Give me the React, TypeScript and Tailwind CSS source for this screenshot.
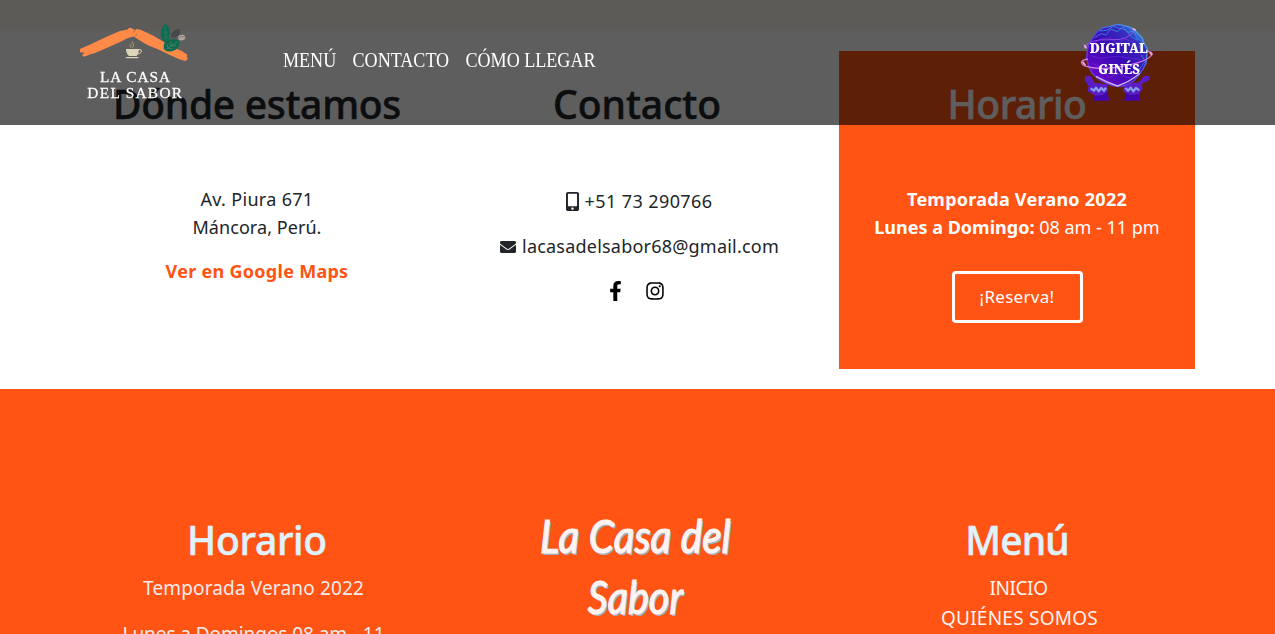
import React from "react";
import { FaFacebookF, FaInstagram, FaEnvelope, FaMobileAlt } from "react-icons/fa";

function Logo() {
  return (
    <svg viewBox="0 0 390 270" className="h-[90px] w-[130px] shrink-0">
      <path d="M30 102 L62 88 L110 65 L150 48 L176 43 L174 40 L184 38 L188 42 L198 45 L198 62 L172 70 L150 81 L110 99 L75 114 L62 118 L42 125 L36 120 L44 113 L30 112 Z" fill="#ff8a48" />
      <path d="M188 50 L200 42 L212 44 L250 62 L290 86 L312 98 L336 108 L352 119 L350 126 L354 131 L347 138 L328 133 L300 120 L262 102 L232 90 L206 74 L190 63 Z" fill="#ff8a48" />
      <path d="M196 44 L191 52 M200 57 L197 62" stroke="#5e5e5e" strokeWidth="2" />
      <path d="M286 26 C304 36 306 66 289 82 C268 76 266 42 286 26 Z" fill="#0f6b50" />
      <path d="M286 34 L288 78 M279 50 L287 56 L295 49 M279 64 L288 69 L296 62" stroke="#4d8370" strokeWidth="1.2" fill="none" />
      <path d="M330 42 C332 58 324 68 305 70 C300 54 312 44 330 42 Z" fill="#454343" />
      <path d="M328 44 L303 73" stroke="#6a6868" strokeWidth="1.6" />
      <ellipse cx="335" cy="68" rx="11" ry="8" fill="#b5a6a0" transform="rotate(-15 335 68)" />
      <path d="M326 70 Q334 62 344 66" stroke="#5b5351" strokeWidth="1.8" fill="none" />
      <path d="M282 103 C276 76 300 66 328 76 C332 100 312 114 288 108 Z" fill="#0f6b50" />
      <path d="M322 80 L286 105 M302 78 L303 92 L318 92 M291 88 L294 99 L308 102" stroke="#7d9270" strokeWidth="1.4" fill="none" />
      <path d="M183 98 Q176 91 184 86 M188 98 Q194 90 187 80" stroke="#ad9f75" strokeWidth="3" fill="none" />
      <path d="M168 102 H207 Q207 116 200 123 H177 Q168 116 168 102 Z" fill="#ddd5b8" />
      <path d="M206 104 Q217 103 213 112 Q210 117 202 117" stroke="#ddd5b8" strokeWidth="3" fill="none" />
      <path d="M165 126 H208 L202 130 H171 Z" fill="#ddd5b8" />
      <g fill="#ffffff" fontFamily="'Liberation Serif', serif" fontSize="46" stroke="#ffffff" strokeWidth="0.8">
        <text x="90" y="201" textLength="210">LA CASA</text>
        <text x="52" y="250" textLength="284">DEL SABOR</text>
      </g>
    </svg>
  );
}

function Badge() {
  return (
    <svg viewBox="0 0 282 282" className="h-[94px] w-[94px] shrink-0">
      <defs>
        <linearGradient id="orb" x1="0.1" y1="0.9" x2="0.8" y2="0.05">
          <stop offset="0" stopColor="#6d08c8" />
          <stop offset="0.5" stopColor="#390ab4" />
          <stop offset="0.85" stopColor="#3a2cc0" />
          <stop offset="1" stopColor="#348de0" />
        </linearGradient>
        <linearGradient id="rim" x1="0" y1="1" x2="1" y2="0">
          <stop offset="0" stopColor="#8a2be8" />
          <stop offset="0.5" stopColor="#4b45d8" />
          <stop offset="1" stopColor="#4cc4f5" />
        </linearGradient>
      </defs>
      <path d="M70 257 L78 222 H110 L118 257 Z M162 257 L170 222 H202 L212 257 Z" fill="#4505ad" />
      <path d="M46 182 L62 184 L75 204 L112 208 L114 228 L98 240 L76 242 L52 228 L56 214 L44 196 Z M238 182 L222 183 L207 202 L162 208 L158 228 L180 240 L206 238 L218 222 L216 206 L238 196 Z" fill="#5a1dc4" />
      <path d="M62 220 L72 227 L78 218 L86 229 L94 219 L102 227 L108 218 M166 219 L174 227 L182 218 L190 229 L198 219 L208 226" stroke="#8b9cf0" strokeWidth="7" fill="none" strokeLinejoin="round" />
      <path d="M142 28 L162 32 L178 36 L194 44 L205 57 L216 68 L222 84 L232 102 L230 124 L228 145 L218 163 L206 181 L190 199 L170 210 L148 215 L124 211 L100 201 L80 188 L66 174 L56 154 L50 130 L52 105 L58 82 L72 65 L82 49 L100 38 L120 34 Z" fill="url(#orb)" stroke="url(#rim)" strokeWidth="4" strokeLinejoin="round" />
      <g fill="none" stroke="#2fa7e8" strokeWidth="2.5" strokeOpacity="0.8">
        <path d="M75 68 L92 56 L108 60 L122 42 L142 50 L158 36 L174 52 L192 48 L200 68 L216 80 L208 96 L226 112" />
        <path d="M88 48 L110 46 L130 34 L148 40 L166 44 L184 66 L204 76 M214 120 L226 140 L212 156 L202 178" />
      </g>
      <g fill="none" stroke="#8f3bee" strokeWidth="2" strokeOpacity="0.6">
        <path d="M64 92 L88 74 L120 68 L140 84 L166 72 L196 84 M66 145 L92 156 L116 188 L148 176 L180 190 L198 170 M62 122 L90 130 L142 124 L212 134" />
      </g>
      <path d="M42 100 Q50 72 120 74 Q178 78 194 43" stroke="#a556e8" strokeWidth="2.5" fill="none" />
      <path d="M78 184 Q112 203 142 213 Q176 203 210 175" stroke="#c8b2f6" strokeWidth="4" fill="none" />
      <path d="M54 132 Q22 138 42 152 Q80 165 134 158 Q240 142 246 116 Q247 110 228 109" stroke="#cf78df" strokeWidth="4" fill="none" />
      <path d="M43 90 L49 100 M38 140 L46 151 M188 40 L197 46 M239 112 L247 120" stroke="#f2a9ee" strokeWidth="5" />
      <g fill="#ffffff" fontFamily="'Noto Serif', 'Liberation Serif', serif" fontWeight="900" fontSize="43">
        <text x="59" y="115" textLength="174" lengthAdjust="spacingAndGlyphs">DIGITAL</text>
        <text x="85" y="178" textLength="124" lengthAdjust="spacingAndGlyphs">GINÉS</text>
      </g>
    </svg>
  );
}

const heading = "text-[39px] leading-[48px] font-medium whitespace-nowrap [-webkit-text-stroke:0.5px_currentColor]";

export default function App() {
  return (
    <div className="h-[634px] overflow-hidden bg-white font-['Noto_Sans',sans-serif] text-[18px] leading-7 text-[#212529]">
      <header className="fixed inset-x-0 top-0 z-10 flex h-[125px] items-start bg-black/63 pt-[15px] pl-[70px]">
        <Logo />
        <nav className="mt-[30px] ml-[83px] flex origin-left scale-x-[0.904] gap-[18px] font-['Liberation_Serif',serif] text-[20px] leading-[30px] whitespace-nowrap text-white">
          <a>MENÚ</a>
          <a>CONTACTO</a>
          <a>CÓMO LLEGAR</a>
        </nav>
        <div className="mr-[111px] ml-auto">
          <Badge />
        </div>
      </header>

      <div className="h-[31px] bg-[#f9f6ee]" />

      <section className="ml-[67px] grid h-[358px] w-[1140px] grid-cols-3 gap-6 px-3 py-5 text-center whitespace-nowrap">
        <div className="pt-[29px]">
          <h2 className={heading + " tracking-[-0.3px]"}>Dónde estamos</h2>
          <p className="mt-[57px] tracking-[0.32px]">Av. Piura 671</p>
          <p className="tracking-[0.06px]">Máncora, Perú.</p>
          <p className="mt-4 font-bold tracking-[0.28px] text-[#ff5414]">Ver en Google Maps</p>
        </div>

        <div className="pt-[29px]">
          <h2 className={heading}>Contacto</h2>
          <p className="mt-[59px] ml-[4px] flex items-center justify-center gap-[6px] tracking-[0.41px]">
            <FaMobileAlt className="h-[19px] w-[13px]" preserveAspectRatio="none" />
            +51 73 290766
          </p>
          <p className="mt-[17px] ml-[5px] flex items-center justify-center gap-[6px] tracking-[0.21px]">
            <FaEnvelope className="mt-[2px] h-[16px] w-[16px]" />
            lacasadelsabor68@gmail.com
          </p>
          <div className="mt-[21px] flex items-center justify-center gap-[23px] text-black">
            <FaFacebookF className="h-[20px] w-[13px]" />
            <FaInstagram className="h-[20px] w-[20px]" />
          </div>
        </div>

        <div className="bg-[#ff5414] pt-[29px] text-white">
          <h2 className={heading + " tracking-[-0.4px]"}>Horario</h2>
          <p className="mt-[57px] font-bold tracking-[0.25px]">Temporada Verano 2022</p>
          <p>
            <b>Lunes a Domingo:</b> 08 am - 11 pm
          </p>
          <button className="mt-[30px] h-[52px] w-[131px] rounded border-3 border-white text-[17px] tracking-[0.3px]">¡Reserva!</button>
        </div>
      </section>

      <footer className="h-[400px] bg-[#ff5414] pt-[127px]">
        <div className="ml-[67px] grid w-[1140px] grid-cols-3 gap-6 px-3 text-center text-[19px] leading-[30px] text-[#f2ecec]">
          <div>
            <h2 className={heading + " tracking-[-0.3px] text-[#dff3ff]"}>Horario</h2>
            <p className="mt-[9px] mr-[7px] tracking-[0.15px]">Temporada Verano 2022</p>
            <p className="mt-4 mr-[7px] px-9 tracking-[-0.06px]">Lunes a Domingos 08 am - 11 pm</p>
          </div>
          <div className="mt-[-11px] mr-[3px] flex flex-col items-center font-['Lato',sans-serif] text-[46px] leading-[61px] text-[#fff4f1] italic [-webkit-text-stroke:1.2px_#fff4f1] [text-shadow:2px_2px_0_#a4b0bd]">
            <span className="scale-x-[0.88] whitespace-nowrap">La Casa del</span>
            <span className="scale-x-[0.86]">Sabor</span>
          </div>
          <div>
            <h2 className={heading + " tracking-[-0.9px] text-[#dff3ff]"}>Menú</h2>
            <p className="mt-[9px] ml-[3px] tracking-[-0.4px] text-[#fff3ee]">INICIO</p>
            <p className="ml-[5px] tracking-[0.24px] text-[#fff3ee]">QUIÉNES SOMOS</p>
          </div>
        </div>
      </footer>
    </div>
  );
}
